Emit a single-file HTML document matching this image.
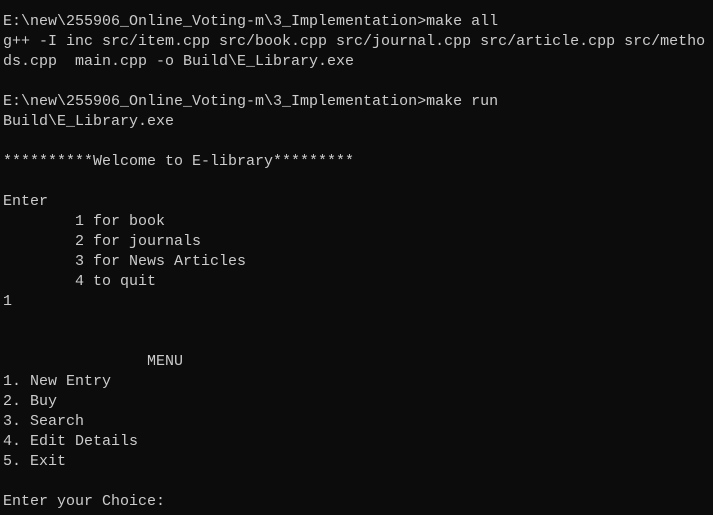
<!DOCTYPE html>
<html><head><style>
html,body{margin:0;padding:0;background:#0c0c0c;width:713px;height:515px;overflow:hidden}
pre{margin:0;padding:12px 0 0 3px;font-family:"Liberation Mono",monospace;font-size:15px;line-height:20px;color:#cccccc;white-space:pre}
</style></head><body><pre>E:\new\255906_Online_Voting-m\3_Implementation&gt;make all
g++ -I inc src/item.cpp src/book.cpp src/journal.cpp src/article.cpp src/metho
ds.cpp  main.cpp -o Build\E_Library.exe

E:\new\255906_Online_Voting-m\3_Implementation&gt;make run
Build\E_Library.exe

**********Welcome to E-library*********

Enter
        1 for book
        2 for journals
        3 for News Articles
        4 to quit
1


                MENU
1. New Entry
2. Buy
3. Search
4. Edit Details
5. Exit

Enter your Choice:
</pre></body></html>
